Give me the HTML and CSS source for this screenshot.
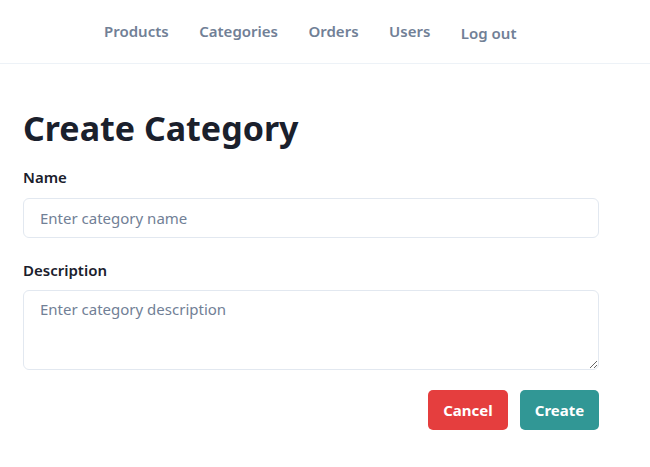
FILE: index.html
```html
<!DOCTYPE html>
<html>
<head>
<meta charset="utf-8">
<link rel="stylesheet" href="styles.css">
</head>
<body>
<nav class="nav">
  <a class="nav-link" href="#">Products</a>
  <a class="nav-link" href="#">Categories</a>
  <a class="nav-link" href="#">Orders</a>
  <a class="nav-link" href="#">Users</a>
  <button class="nav-link nav-btn">Log out</button>
</nav>
<main class="main">
  <h1 class="title">Create Category</h1>
  <form class="form">
    <label class="label">Name</label>
    <input class="input" type="text" placeholder="Enter category name">
    <label class="label label-gap">Description</label>
    <textarea class="textarea" placeholder="Enter category description"></textarea>
    <div class="actions">
      <button type="button" class="btn btn-cancel">Cancel</button>
      <button type="button" class="btn btn-create">Create</button>
    </div>
  </form>
</main>
</body>
</html>
```

FILE: styles.css
```css
* { box-sizing: border-box; }
body {
  margin: 0;
  font-family: "Noto Sans", "Open Sans", sans-serif;
  color: #1a202c;
  background: #fff;
}
.nav {
  height: 64px;
  border-bottom: 1px solid #edf2f7;
  display: flex;
  align-items: center;
  padding-left: 104px;
  padding-bottom: 1px;
  gap: 30.5px;
}
.nav-link {
  font-family: inherit;
  font-size: 15px;
  font-weight: 600;
  color: #718096;
  text-decoration: none;
}
.nav-btn {
  background: none;
  border: 0;
  padding: 0;
  margin-top: 3px;
  cursor: pointer;
}
.main {
  padding: 0 23px;
  width: 622px;
}
.title {
  font-size: 34px;
  font-weight: 700;
  margin: 40px 0 0;
  line-height: 48px;
}
.form {
  display: flex;
  flex-direction: column;
}
.label {
  font-size: 15px;
  font-weight: 600;
  margin-top: 15px;
  margin-bottom: 11px;
  line-height: 20px;
}
.label-gap { margin-top: 22px; margin-bottom: 10px; }
.input, .textarea {
  font-family: inherit;
  font-size: 15px;
  border: 1px solid #e2e8f0;
  border-radius: 6px;
  padding: 8px 16px;
  color: #1a202c;
  width: 100%;
}
.input { height: 40px; }
.textarea { height: 80px; resize: vertical; }
.input::placeholder, .textarea::placeholder { color: #718096; }
.actions {
  display: flex;
  justify-content: flex-end;
  gap: 12px;
  margin-top: 20px;
}
.btn {
  font-family: inherit;
  font-size: 15px;
  font-weight: 700;
  color: #fff;
  border: 0;
  border-radius: 5px;
  height: 40px;
  width: 80px;
}
.btn-cancel { background: #e53e3e; }
.btn-create { background: #319795; width: 79px; }
```
